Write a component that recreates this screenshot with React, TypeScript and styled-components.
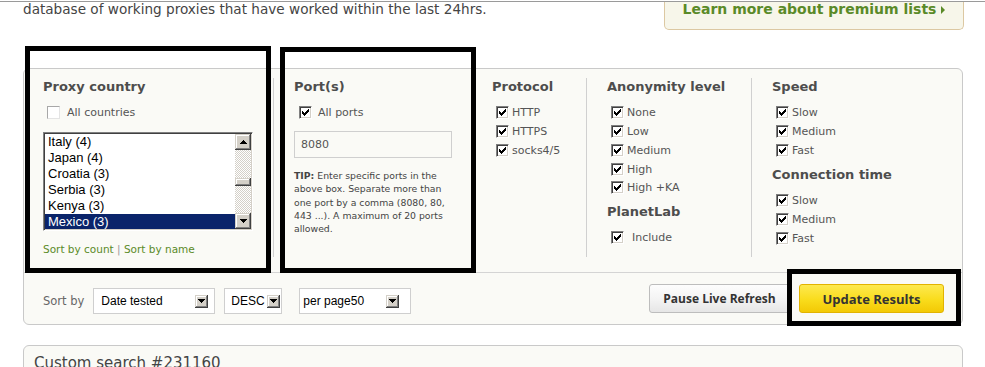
import React from "react";
import styled, { createGlobalStyle } from "styled-components";

const GlobalStyle = createGlobalStyle`
  html, body {
    margin: 0;
    padding: 0;
    background: #fff;
  }
  body {
    font-family: "DejaVu Sans", Verdana, sans-serif;
    color: #444;
  }
`;

const Page = styled.div`
  position: relative;
  width: 985px;
  height: 367px;
  overflow: hidden;
`;

const TopRule = styled.div`
  height: 1px;
  margin-top: 1px;
  background: #9a9a9a;
`;

const Content = styled.div`
  width: 940px;
  margin-left: 23px;
`;

const Header = styled.div`
  display: flex;
  justify-content: space-between;
  align-items: flex-start;
  height: 66px;
`;

const Intro = styled.div`
  margin-top: -2px;
  font-size: 13.6px;
  line-height: 18px;
  color: #444;
`;

const Premium = styled.a`
  box-sizing: border-box;
  width: 300px;
  height: 28px;
  margin-right: -1px;
  border: 1px solid #dcc8a2;
  border-top: none;
  border-radius: 0 0 5px 5px;
  background: #f7f6ea;
  color: #5a8a28;
  font-size: 14px;
  font-weight: bold;
  line-height: 15px;
  text-align: center;
  text-decoration: none;

  &::after {
    content: "";
    display: inline-block;
    margin-left: 5px;
    border-left: 4px solid #5a8a28;
    border-top: 4px solid transparent;
    border-bottom: 4px solid transparent;
    vertical-align: 0;
  }
`;

const Panel = styled.div`
  border: 1px solid #c9c9c9;
  border-radius: 6px;
  background: #fafaf6;
`;

const Filters = styled.div`
  display: flex;
  box-sizing: border-box;
  height: 204px;
  border-bottom: 1px solid #d4d4d4;
`;

const Column = styled.div<{ $width?: number; $first?: boolean }>`
  box-sizing: border-box;
  flex: ${(p) => (p.$width ? "none" : 1)};
  width: ${(p) => (p.$width ? `${p.$width}px` : "auto")};
  margin: 9px 0 15px;
  padding: 1px 0 0 ${(p) => (p.$first ? 19 : 20)}px;
  border-left: ${(p) => (p.$first ? "none" : "1px solid #d0d0d0")};
`;

const Heading = styled.h3<{ $gap?: number }>`
  margin: ${(p) => p.$gap ?? 0}px 0 8.5px;
  font-size: 13px;
  line-height: 16px;
  font-weight: bold;
  color: #4d4d4d;
  white-space: nowrap;
`;

const CheckRow = styled.label<{ $gap?: number }>`
  display: flex;
  align-items: center;
  gap: ${(p) => p.$gap ?? 3}px;
  height: 18.75px;
  padding-left: 4px;
  font-size: 11px;
  color: #555;
  white-space: nowrap;
`;

const AllRow = styled(CheckRow)`
  height: 17px;
  gap: 7px;
`;

const Box = styled.span<{ $light?: boolean }>`
  display: flex;
  align-items: center;
  justify-content: center;
  flex: none;
  box-sizing: border-box;
  width: 13px;
  height: 13px;
  background: #fff;
  border: 1px solid;
  border-color: ${(p) =>
    p.$light ? "#a8a8a8 #e4e4e4 #e4e4e4 #a8a8a8" : "#808080 #fff #fff #808080"};
  box-shadow: ${(p) =>
    p.$light ? "none" : "inset 1px 1px #404040, inset -1px -1px #d4d0c8"};
`;

const Check = () => (
  <svg width="7" height="7" viewBox="0 0 7 7" shapeRendering="crispEdges">
    <path
      d="M6 0h1v1h-1z M5 1h2v1h-2z M0 2h1v1h-1z M4 2h3v1h-3z M0 3h2v1h-2z M3 3h3v1h-3z M0 4h5v1h-5z M1 5h3v1h-3z M2 6h1v1h-1z"
      fill="#000"
    />
  </svg>
);

const Checkbox = ({ checked = true }: { checked?: boolean }) => (
  <Box $light={!checked}>{checked && <Check />}</Box>
);

const ListBox = styled.div`
  display: flex;
  box-sizing: border-box;
  width: 210px;
  height: 99px;
  margin-top: 11.5px;
  padding: 1px;
  background: #fff;
  border: 1px solid;
  border-color: #808080 #fff #fff #808080;
  box-shadow: inset 1px 1px #404040, inset -1px -1px #d4d0c8;
  overflow: hidden;
`;

const Options = styled.div`
  flex: 1;
  overflow: hidden;
`;

const Option = styled.div<{ $selected?: boolean }>`
  height: 16px;
  padding-left: 3px;
  font-family: "Liberation Sans", Arial, sans-serif;
  font-size: 13px;
  line-height: 16px;
  color: ${(p) => (p.$selected ? "#fff" : "#000")};
  background: ${(p) => (p.$selected ? "#0a246a" : "transparent")};
`;

const ScrollBar = styled.div`
  display: flex;
  flex-direction: column;
  width: 16px;
`;

const ClassicButton = styled.div<{ $size?: number }>`
  display: flex;
  align-items: center;
  justify-content: center;
  flex: none;
  width: ${(p) => p.$size ?? 16}px;
  height: ${(p) => p.$size ?? 16}px;
  background: #d4d0c8;
  box-shadow: inset -1px -1px #404040, inset 1px 1px #d4d0c8,
    inset -2px -2px #808080, inset 2px 2px #fff;
`;

const Track = styled.div`
  flex: 1;
  background: repeating-conic-gradient(#d4d0c8 0 25%, #fff 0 50%) 0 0 / 2px 2px;
`;

const Thumb = styled(ClassicButton)`
  height: 8px;
  margin-top: 28px;
`;

const UpArrow = () => (
  <svg width="7" height="4" viewBox="0 0 7 4" shapeRendering="crispEdges">
    <path d="M3 0h1v1h1v1h1v1h1v1h-7v-1h1v-1h1v-1h1z" fill="#000" />
  </svg>
);

const DownArrow = () => (
  <svg width="7" height="4" viewBox="0 0 7 4" shapeRendering="crispEdges">
    <path d="M0 0h7v1h-1v1h-1v1h-1v1h-1v-1h-1v-1h-1v-1h-1z" fill="#000" />
  </svg>
);

const SortLinks = styled.div`
  margin-top: 11px;
  font-size: 10.5px;
  line-height: 14px;
  color: #999;
  white-space: nowrap;

  a {
    color: #5a8a28;
    text-decoration: none;
  }
`;

const PortInput = styled.div`
  box-sizing: border-box;
  width: 158px;
  height: 27px;
  margin-top: 10.5px;
  padding-left: 6px;
  border: 1px solid #cfcfcf;
  background: #fafaf6;
  font-size: 11px;
  line-height: 25px;
  color: #555;
`;

const Tip = styled.p`
  margin: 11px 0 0;
  font-size: 9.3px;
  line-height: 13.3px;
  color: #444;
  white-space: nowrap;

  strong {
    font-weight: bold;
  }
`;

const SortBar = styled.div`
  display: flex;
  align-items: center;
  height: 51px;
  padding: 0 18px 0 19px;
`;

const SortGroup = styled.div`
  display: flex;
  align-items: center;
  flex: 1;
  margin-top: 5px;
`;

const SortLabel = styled.span`
  font-size: 11.5px;
  color: #666;
`;

const SelectBox = styled.div<{ $width: number; $left: number; $right: number; $gap: number }>`
  display: flex;
  align-items: center;
  box-sizing: border-box;
  width: ${(p) => p.$width}px;
  height: 26px;
  margin-left: ${(p) => p.$gap}px;
  padding: 0 ${(p) => p.$right}px 0 ${(p) => p.$left}px;
  border: 1px solid #cfcfcf;
  background: #fff;
  font-family: "Liberation Sans", Arial, sans-serif;
  font-size: 12px;
  color: #000;
`;

const SelectText = styled.span`
  flex: 1;
  white-space: nowrap;
`;

const Select = ({
  label,
  width,
  left = 7,
  right = 6,
  gap = 9,
}: {
  label: string;
  width: number;
  left?: number;
  right?: number;
  gap?: number;
}) => (
  <SelectBox $width={width} $left={left} $right={right} $gap={gap}>
    <SelectText>{label}</SelectText>
    <ClassicButton $size={13}>
      <DownArrow />
    </ClassicButton>
  </SelectBox>
);

const Button = styled.button<{ $primary?: boolean }>`
  box-sizing: border-box;
  width: ${(p) => (p.$primary ? 145 : 141)}px;
  height: 29px;
  margin-left: ${(p) => (p.$primary ? 9 : 0)}px;
  padding: 0;
  border: 1px solid ${(p) => (p.$primary ? "#e2b300" : "#bdbdbd")};
  border-radius: 3px;
  background: ${(p) =>
    p.$primary
      ? "linear-gradient(#fde94f, #f9dc1c 55%, #f3c905)"
      : "linear-gradient(#fdfdfd, #f3f3f3 55%, #e6e6e6)"};
  font-family: "Open Sans", "DejaVu Sans", sans-serif;
  font-size: ${(p) => (p.$primary ? 13 : 12)}px;
  font-weight: bold;
  color: #333;
`;

const CustomPanel = styled.div`
  margin-top: 20px;
  height: 60px;
  padding: 8px 10px;
  border: 1px solid #c9c9c9;
  border-radius: 6px;
  background: #fafaf6;
  font-size: 15px;
  line-height: 18px;
  color: #444;
`;

const Marker = styled.div<{ $x: number; $y: number; $w: number; $h: number }>`
  position: absolute;
  left: ${(p) => p.$x}px;
  top: ${(p) => p.$y}px;
  width: ${(p) => p.$w}px;
  height: ${(p) => p.$h}px;
  box-sizing: border-box;
  border: 5px solid #000;
  pointer-events: none;
`;

const countries = ["Italy (4)", "Japan (4)", "Croatia (3)", "Serbia (3)", "Kenya (3)", "Mexico (3)"];

const OptionList = ({ items, gap }: { items: string[]; gap?: number }) => (
  <>
    {items.map((item) => (
      <CheckRow key={item} $gap={gap}>
        <Checkbox />
        {item}
      </CheckRow>
    ))}
  </>
);

const App = () => (
  <>
    <GlobalStyle />
    <Page>
      <TopRule />
      <Content>
        <Header>
          <Intro>database of working proxies that have worked within the last 24hrs.</Intro>
          <Premium href="#">Learn more about premium lists</Premium>
        </Header>

        <Panel>
          <Filters>
            <Column $first $width={249}>
              <Heading>Proxy country</Heading>
              <AllRow>
                <Checkbox checked={false} />
                All countries
              </AllRow>
              <ListBox>
                <Options>
                  {countries.map((c) => (
                    <Option key={c} $selected={c === "Mexico (3)"}>
                      {c}
                    </Option>
                  ))}
                </Options>
                <ScrollBar>
                  <ClassicButton>
                    <UpArrow />
                  </ClassicButton>
                  <Track>
                    <Thumb />
                  </Track>
                  <ClassicButton>
                    <DownArrow />
                  </ClassicButton>
                </ScrollBar>
              </ListBox>
              <SortLinks>
                <a href="#">Sort by count</a> | <a href="#">Sort by name</a>
              </SortLinks>
            </Column>

            <Column $width={198}>
              <Heading>Port(s)</Heading>
              <AllRow style={{ paddingLeft: 5, gap: 6 }}>
                <Checkbox />
                All ports
              </AllRow>
              <PortInput>8080</PortInput>
              <Tip>
                <strong>TIP:</strong> Enter specific ports in the
                <br />
                above box. Separate more than
                <br />
                one port by a comma (8080, 80,
                <br />
                443 ...). A maximum of 20 ports
                <br />
                allowed.
              </Tip>
            </Column>

            <Column $width={115}>
              <Heading>Protocol</Heading>
              <OptionList items={["HTTP", "HTTPS", "socks4/5"]} />
            </Column>

            <Column $width={165}>
              <Heading>Anonymity level</Heading>
              <OptionList items={["None", "Low", "Medium", "High", "High +KA"]} />
              <Heading $gap={6.5}>PlanetLab</Heading>
              <OptionList items={["Include"]} gap={8} />
            </Column>

            <Column>
              <Heading>Speed</Heading>
              <OptionList items={["Slow", "Medium", "Fast"]} />
              <Heading $gap={7.25}>Connection time</Heading>
              <OptionList items={["Slow", "Medium", "Fast"]} />
            </Column>
          </Filters>

          <SortBar>
            <SortGroup>
              <SortLabel>Sort by</SortLabel>
              <Select label="Date tested" width={122} />
              <Select label="DESC" width={58} left={6} right={1} />
              <Select label="per page50" width={112} left={3} right={11} gap={17} />
            </SortGroup>
            <Button>Pause Live Refresh</Button>
            <Button $primary>Update Results</Button>
          </SortBar>
        </Panel>

        <CustomPanel>Custom search #231160</CustomPanel>
      </Content>

      <Marker $x={25} $y={46} $w={246} $h={227} />
      <Marker $x={280} $y={47} $w={196} $h={226} />
      <Marker $x={787} $y={269} $w={174} $h={57} />
    </Page>
  </>
);

export default App;
